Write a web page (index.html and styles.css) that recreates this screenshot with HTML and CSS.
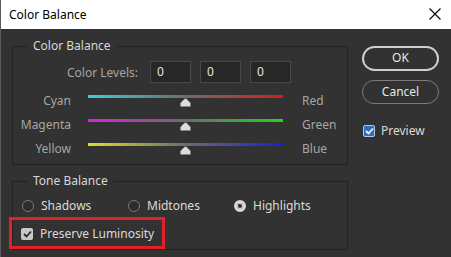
FILE: index.html
```html
<!DOCTYPE html>
<html>
<head>
<meta charset="utf-8">
<link rel="stylesheet" href="styles.css">
</head>
<body>
<div class="window">
  <div class="titlebar">
    <span class="title">Color Balance</span>
    <svg class="close" width="12" height="12" viewBox="0 0 12 12"><path d="M0.5 0.5 L11.5 11.5 M11.5 0.5 L0.5 11.5" stroke="#000" stroke-width="1.1" fill="none"/></svg>
  </div>
  <div class="main">
    <div class="left">
      <div class="group group-cb">
        <span class="legend">Color Balance</span>
        <div class="levels">
          <span class="levels-label">Color Levels:</span>
          <div class="num">0</div>
          <div class="num">0</div>
          <div class="num">0</div>
        </div>
        <div class="sliders">
          <div class="srow">
            <span class="sl">Cyan</span>
            <div class="track t-cr"><svg class="thumb" width="11" height="9" viewBox="0 0 11 9"><path d="M5.5 0.5 Q6 0.5 6.5 1 L10.5 5 V8.5 H0.5 V5 L4.5 1 Q5 0.5 5.5 0.5 Z" fill="#dcdcdc"/></svg></div>
            <span class="sr">Red</span>
          </div>
          <div class="srow">
            <span class="sl">Magenta</span>
            <div class="track t-mg"><svg class="thumb" width="11" height="9" viewBox="0 0 11 9"><path d="M5.5 0.5 Q6 0.5 6.5 1 L10.5 5 V8.5 H0.5 V5 L4.5 1 Q5 0.5 5.5 0.5 Z" fill="#dcdcdc"/></svg></div>
            <span class="sr">Green</span>
          </div>
          <div class="srow">
            <span class="sl">Yellow</span>
            <div class="track t-yb"><svg class="thumb" width="11" height="9" viewBox="0 0 11 9"><path d="M5.5 0.5 Q6 0.5 6.5 1 L10.5 5 V8.5 H0.5 V5 L4.5 1 Q5 0.5 5.5 0.5 Z" fill="#dcdcdc"/></svg></div>
            <span class="sr">Blue</span>
          </div>
        </div>
      </div>
      <div class="group group-tb">
        <span class="legend">Tone Balance</span>
        <div class="radios">
          <label class="radio"><span class="rbox"></span>Shadows</label>
          <label class="radio"><span class="rbox"></span>Midtones</label>
          <label class="radio"><span class="rbox on"></span>Highlights</label>
        </div>
        <div class="preserve">
          <span class="cbox grey"><svg width="9" height="8" viewBox="0 0 9 8"><path d="M1 4 L3.5 6.5 L8 1.5" stroke="#2a2a2a" stroke-width="1.8" fill="none"/></svg></span>
          <span>Preserve Luminosity</span>
        </div>
        <div class="highlight"></div>
      </div>
    </div>
    <div class="right">
      <div class="btn btn-ok">OK</div>
      <div class="btn btn-cancel">Cancel</div>
      <div class="preview">
        <span class="cbox blue"><svg width="9" height="8" viewBox="0 0 9 8"><path d="M1 4 L3.5 6.5 L8 1.5" stroke="#f0f0f0" stroke-width="1.8" fill="none"/></svg></span>
        <span>Preview</span>
      </div>
    </div>
  </div>
</div>
</body>
</html>
```

FILE: styles.css
```css
html, body {
  margin: 0;
  padding: 0;
}
body {
  width: 451px;
  height: 257px;
  overflow: hidden;
  background: #323232;
  font-family: "Noto Sans", "Open Sans", sans-serif;
  font-size: 12px;
}
.window {
  width: 451px;
  height: 257px;
  box-sizing: border-box;
  border-left: 1px solid #5c5c5c;
  background: #323232;
}
.titlebar {
  height: 29px;
  background: #ffffff;
  display: flex;
  align-items: center;
  justify-content: space-between;
  padding: 0 10px 0 8px;
}
.title {
  color: #000;
  font-size: 12px;
}
.close {
  display: block;
  margin-top: -1px;
}
.main {
  display: flex;
  padding: 17px 0 0 11px;
}
.left {
  width: 336px;
  display: flex;
  flex-direction: column;
}
.group {
  position: relative;
  box-sizing: border-box;
  border: 1px solid #222222;
  width: 336px;
}
.legend {
  position: absolute;
  top: -9px;
  left: 15px;
  padding: 0 5px;
  background: #323232;
  color: #d8d8d8;
  line-height: 16px;
}
.group-cb {
  height: 119px;
  padding-top: 14px;
}
.group-tb {
  height: 69px;
  margin-top: 16px;
  padding-top: 15px;
}
.levels {
  display: flex;
  align-items: center;
  height: 22px;
}
.levels-label {
  width: 125px;
  text-align: right;
  margin-right: 12px;
  color: #a6a6a6;
}
.num {
  box-sizing: border-box;
  width: 41px;
  height: 22px;
  margin-right: 9px;
  background: #272727;
  border: 1px solid #494949;
  color: #e4e4e4;
  padding-left: 6px;
  line-height: 19px;
}
.sliders {
  margin-top: 6px;
}
.srow {
  display: grid;
  grid-template-columns: 58px 195px auto;
  column-gap: 17px;
  height: 24px;
  align-items: start;
}
.srow .sr {
  margin-left: 2px;
}
.sl, .sr {
  color: #a6a6a6;
  line-height: 16px;
  margin-top: 4px;
}
.sl {
  text-align: right;
}
.track {
  position: relative;
  height: 3px;
  margin-top: 6px;
}
.t-cr { background: linear-gradient(to right, #34d2d8, #6c6c6c 50%, #d21e1e); }
.t-mg { background: linear-gradient(to right, #d824d8, #6c6c6c 50%, #22d222); }
.t-yb { background: linear-gradient(to right, #dede22, #6c6c6c 50%, #1e1ed2); }
.thumb {
  position: absolute;
  left: 92px;
  top: 3px;
  display: block;
}
.radios {
  display: grid;
  grid-template-columns: 106px 106px auto;
  padding-left: 9px;
  height: 16px;
  align-items: center;
}
.radio {
  display: flex;
  align-items: center;
  color: #dadada;
}
.rbox {
  box-sizing: border-box;
  width: 12px;
  height: 12px;
  border-radius: 50%;
  border: 1px solid #7a7a7a;
  background: #2c2c2c;
  margin-right: 7px;
}
.rbox.on {
  border: 3px solid #d8d8d8;
  background: #303030;
  box-shadow: inset 0 0 0 1px #d8d8d8;
  position: relative;
}
.rbox.on::after {
  content: "";
  position: absolute;
  left: 1px;
  top: 1px;
  width: 2px;
  height: 2px;
  border-radius: 50%;
  background: #303030;
}
.preserve {
  display: flex;
  align-items: center;
  margin-top: 12px;
  padding-left: 8px;
  color: #dadada;
}
.cbox {
  box-sizing: border-box;
  width: 12px;
  height: 12px;
  border-radius: 2px;
  display: flex;
  align-items: center;
  justify-content: center;
  margin-right: 7px;
}
.cbox.grey {
  background: #c8c8c8;
}
.cbox.blue {
  background: #2f6bc2;
  border: 1px solid #b8c8e0;
}
.highlight {
  position: absolute;
  left: -4px;
  top: 35px;
  width: 156px;
  height: 32px;
  box-sizing: border-box;
  border: 3px solid #e3202a;
}
.right {
  margin-left: 14px;
  display: flex;
  flex-direction: column;
  width: 77px;
}
.btn {
  box-sizing: border-box;
  width: 77px;
  border-radius: 13px;
  color: #e6e6e6;
  text-align: center;
}
.btn-ok {
  height: 25px;
  border: 2px solid #cfcfcf;
  line-height: 20px;
}
.btn-cancel {
  height: 24px;
  margin-top: 9px;
  border: 1px solid #7c7c7c;
  line-height: 21px;
}
.preview {
  display: flex;
  align-items: center;
  margin-top: 18px;
  margin-left: 1px;
  color: #dadada;
}
.preview .cbox {
  margin-right: 6px;
}
```
